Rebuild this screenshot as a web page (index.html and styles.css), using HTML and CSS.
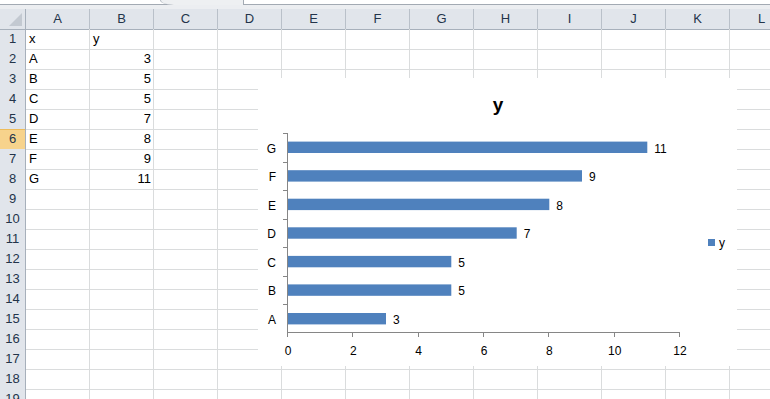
FILE: index.html
```html
<!DOCTYPE html>
<html>
<head>
  <title>Book1 - Microsoft Excel</title>
  <meta charset="utf-8">
  <link rel="stylesheet" href="styles.css">
</head>
<body>
  <div class="topbar">
    <div class="formula-bar">
      <div class="formula-grip"></div>
    </div>
  </div>

  <div class="sheet">
    <div class="row head-row">
      <div class="corner"></div>
      <div class="col-head">A</div><div class="col-head">B</div><div class="col-head">C</div><div class="col-head">D</div>
      <div class="col-head">E</div><div class="col-head">F</div><div class="col-head">G</div><div class="col-head">H</div>
      <div class="col-head">I</div><div class="col-head">J</div><div class="col-head">K</div><div class="col-head">L</div>
    </div>
    <div class="row">
      <div class="row-head">1</div><div class="cell">x</div><div class="cell">y</div>
      <div class="cell"></div><div class="cell"></div><div class="cell"></div><div class="cell"></div><div class="cell"></div><div class="cell"></div><div class="cell"></div><div class="cell"></div><div class="cell"></div><div class="cell"></div>
    </div>
    <div class="row">
      <div class="row-head">2</div><div class="cell">A</div><div class="cell num">3</div>
      <div class="cell"></div><div class="cell"></div><div class="cell"></div><div class="cell"></div><div class="cell"></div><div class="cell"></div><div class="cell"></div><div class="cell"></div><div class="cell"></div><div class="cell"></div>
    </div>
    <div class="row">
      <div class="row-head">3</div><div class="cell">B</div><div class="cell num">5</div>
      <div class="cell"></div><div class="cell"></div><div class="cell"></div><div class="cell"></div><div class="cell"></div><div class="cell"></div><div class="cell"></div><div class="cell"></div><div class="cell"></div><div class="cell"></div>
    </div>
    <div class="row">
      <div class="row-head">4</div><div class="cell">C</div><div class="cell num">5</div>
      <div class="cell"></div><div class="cell"></div><div class="cell"></div><div class="cell"></div><div class="cell"></div><div class="cell"></div><div class="cell"></div><div class="cell"></div><div class="cell"></div><div class="cell"></div>
    </div>
    <div class="row">
      <div class="row-head">5</div><div class="cell">D</div><div class="cell num">7</div>
      <div class="cell"></div><div class="cell"></div><div class="cell"></div><div class="cell"></div><div class="cell"></div><div class="cell"></div><div class="cell"></div><div class="cell"></div><div class="cell"></div><div class="cell"></div>
    </div>
    <div class="row">
      <div class="row-head selected">6</div><div class="cell">E</div><div class="cell num">8</div>
      <div class="cell"></div><div class="cell"></div><div class="cell"></div><div class="cell"></div><div class="cell"></div><div class="cell"></div><div class="cell"></div><div class="cell"></div><div class="cell"></div><div class="cell"></div>
    </div>
    <div class="row">
      <div class="row-head">7</div><div class="cell">F</div><div class="cell num">9</div>
      <div class="cell"></div><div class="cell"></div><div class="cell"></div><div class="cell"></div><div class="cell"></div><div class="cell"></div><div class="cell"></div><div class="cell"></div><div class="cell"></div><div class="cell"></div>
    </div>
    <div class="row">
      <div class="row-head">8</div><div class="cell">G</div><div class="cell num">11</div>
      <div class="cell"></div><div class="cell"></div><div class="cell"></div><div class="cell"></div><div class="cell"></div><div class="cell"></div><div class="cell"></div><div class="cell"></div><div class="cell"></div><div class="cell"></div>
    </div>
    <div class="row">
      <div class="row-head">9</div>
      <div class="cell"></div><div class="cell"></div><div class="cell"></div><div class="cell"></div><div class="cell"></div><div class="cell"></div><div class="cell"></div><div class="cell"></div><div class="cell"></div><div class="cell"></div><div class="cell"></div><div class="cell"></div>
    </div>
    <div class="row">
      <div class="row-head">10</div>
      <div class="cell"></div><div class="cell"></div><div class="cell"></div><div class="cell"></div><div class="cell"></div><div class="cell"></div><div class="cell"></div><div class="cell"></div><div class="cell"></div><div class="cell"></div><div class="cell"></div><div class="cell"></div>
    </div>
    <div class="row">
      <div class="row-head">11</div>
      <div class="cell"></div><div class="cell"></div><div class="cell"></div><div class="cell"></div><div class="cell"></div><div class="cell"></div><div class="cell"></div><div class="cell"></div><div class="cell"></div><div class="cell"></div><div class="cell"></div><div class="cell"></div>
    </div>
    <div class="row">
      <div class="row-head">12</div>
      <div class="cell"></div><div class="cell"></div><div class="cell"></div><div class="cell"></div><div class="cell"></div><div class="cell"></div><div class="cell"></div><div class="cell"></div><div class="cell"></div><div class="cell"></div><div class="cell"></div><div class="cell"></div>
    </div>
    <div class="row">
      <div class="row-head">13</div>
      <div class="cell"></div><div class="cell"></div><div class="cell"></div><div class="cell"></div><div class="cell"></div><div class="cell"></div><div class="cell"></div><div class="cell"></div><div class="cell"></div><div class="cell"></div><div class="cell"></div><div class="cell"></div>
    </div>
    <div class="row">
      <div class="row-head">14</div>
      <div class="cell"></div><div class="cell"></div><div class="cell"></div><div class="cell"></div><div class="cell"></div><div class="cell"></div><div class="cell"></div><div class="cell"></div><div class="cell"></div><div class="cell"></div><div class="cell"></div><div class="cell"></div>
    </div>
    <div class="row">
      <div class="row-head">15</div>
      <div class="cell"></div><div class="cell"></div><div class="cell"></div><div class="cell"></div><div class="cell"></div><div class="cell"></div><div class="cell"></div><div class="cell"></div><div class="cell"></div><div class="cell"></div><div class="cell"></div><div class="cell"></div>
    </div>
    <div class="row">
      <div class="row-head">16</div>
      <div class="cell"></div><div class="cell"></div><div class="cell"></div><div class="cell"></div><div class="cell"></div><div class="cell"></div><div class="cell"></div><div class="cell"></div><div class="cell"></div><div class="cell"></div><div class="cell"></div><div class="cell"></div>
    </div>
    <div class="row">
      <div class="row-head">17</div>
      <div class="cell"></div><div class="cell"></div><div class="cell"></div><div class="cell"></div><div class="cell"></div><div class="cell"></div><div class="cell"></div><div class="cell"></div><div class="cell"></div><div class="cell"></div><div class="cell"></div><div class="cell"></div>
    </div>
    <div class="row">
      <div class="row-head">18</div>
      <div class="cell"></div><div class="cell"></div><div class="cell"></div><div class="cell"></div><div class="cell"></div><div class="cell"></div><div class="cell"></div><div class="cell"></div><div class="cell"></div><div class="cell"></div><div class="cell"></div><div class="cell"></div>
    </div>
    <div class="row">
      <div class="row-head">19</div>
      <div class="cell"></div><div class="cell"></div><div class="cell"></div><div class="cell"></div><div class="cell"></div><div class="cell"></div><div class="cell"></div><div class="cell"></div><div class="cell"></div><div class="cell"></div><div class="cell"></div><div class="cell"></div>
    </div>

    <!-- embedded chart, sits over the cells -->
    <div class="chart">
      <svg width="479" height="288" viewBox="0 0 479 288">
        <g transform="translate(-258 -78)">
          <text class="chart-title" x="498" y="111">y</text>

          <g class="bars">
            <rect x="288" y="313.0" width="98" height="11.4"/>
            <rect x="288" y="284.4" width="163.3" height="11.4"/>
            <rect x="288" y="255.9" width="163.3" height="11.4"/>
            <rect x="288" y="227.3" width="228.7" height="11.4"/>
            <rect x="288" y="198.7" width="261.3" height="11.4"/>
            <rect x="288" y="170.2" width="294" height="11.4"/>
            <rect x="288" y="141.6" width="359.3" height="11.4"/>
          </g>

          <g class="axis" shape-rendering="crispEdges">
            <line x1="287.5" y1="133" x2="287.5" y2="333"/>
            <line x1="283" y1="133.5" x2="288" y2="133.5"/>
            <line x1="283" y1="162" x2="288" y2="162"/>
            <line x1="283" y1="190.5" x2="288" y2="190.5"/>
            <line x1="283" y1="219" x2="288" y2="219"/>
            <line x1="283" y1="247.5" x2="288" y2="247.5"/>
            <line x1="283" y1="276" x2="288" y2="276"/>
            <line x1="283" y1="304.5" x2="288" y2="304.5"/>
            <line x1="287" y1="332.5" x2="680" y2="332.5"/>
            <line x1="287.5" y1="332" x2="287.5" y2="337"/>
            <line x1="352.8" y1="332" x2="352.8" y2="337"/>
            <line x1="418.2" y1="332" x2="418.2" y2="337"/>
            <line x1="483.5" y1="332" x2="483.5" y2="337"/>
            <line x1="548.8" y1="332" x2="548.8" y2="337"/>
            <line x1="614.2" y1="332" x2="614.2" y2="337"/>
            <line x1="679.5" y1="332" x2="679.5" y2="337"/>
          </g>

          <g class="cat-labels">
            <text x="276" y="324">A</text>
            <text x="276" y="295.4">B</text>
            <text x="276" y="266.9">C</text>
            <text x="276" y="238.3">D</text>
            <text x="276" y="209.7">E</text>
            <text x="276" y="181.2">F</text>
            <text x="276" y="152.6">G</text>
          </g>

          <g class="val-labels">
            <text x="393" y="324">3</text>
            <text x="458.3" y="295.4">5</text>
            <text x="458.3" y="266.9">5</text>
            <text x="523.7" y="238.3">7</text>
            <text x="556.3" y="209.7">8</text>
            <text x="589" y="181.2">9</text>
            <text x="654.3" y="152.6">11</text>
          </g>

          <g class="x-labels">
            <text x="288" y="355">0</text>
            <text x="353.3" y="355">2</text>
            <text x="418.7" y="355">4</text>
            <text x="484" y="355">6</text>
            <text x="549.3" y="355">8</text>
            <text x="614.7" y="355">10</text>
            <text x="680" y="355">12</text>
          </g>

          <rect class="legend-key" x="708" y="239" width="7" height="7"/>
          <text class="legend-text" x="719" y="247">y</text>
        </g>
      </svg>
    </div>
  </div>
</body>
</html>
```

FILE: styles.css
```css
* {
  margin: 0;
  padding: 0;
  box-sizing: border-box;
}

body {
  width: 770px;
  height: 399px;
  overflow: hidden;
  background: white;
  font-family: 'Liberation Sans', Arial, sans-serif;
  font-size: 13px;
  color: #000;
}

/* strip left over from the formula bar */
.topbar {
  height: 9px;
  background: #eceef1;
}

.formula-bar {
  height: 5px;
  background: white;
  border-bottom: 1px solid #a3aab3;
  position: relative;
}

.formula-grip {
  position: absolute;
  left: 160px;
  top: 0;
  width: 84px;
  height: 5px;
  background: #eef0f2;
  border-left: 1px solid #b4bac2;
  border-right: 1px solid #a3aab3;
  border-bottom-left-radius: 14px 5px;
}

.sheet {
  position: relative;
}

.row {
  display: grid;
  grid-template-columns: 26px repeat(12, 64px);
  height: 20px;
}

.cell {
  border-right: 1px solid #dadcdd;
  border-bottom: 1px solid #dadcdd;
  padding: 0 2px 0 3px;
  line-height: 20px;
  white-space: nowrap;
  overflow: hidden;
}

.num {
  text-align: right;
}

.corner,
.col-head,
.row-head {
  background: #e1e5eb;
  color: #23344a;
  text-align: center;
  line-height: 20px;
}

.corner {
  border-right: 1px solid #a7b0bb;
  border-bottom: 1px solid #a7b0bb;
  position: relative;
}

.corner::after {
  content: "";
  position: absolute;
  right: 3px;
  bottom: 3px;
  border-left: 13px solid transparent;
  border-bottom: 13px solid #c3c9d1;
}

.col-head {
  border-right: 1px solid #b9c0c9;
  border-bottom: 1px solid #a7b0bb;
}

.row-head {
  border-right: 1px solid #a7b0bb;
  border-bottom: 1px solid #c3c9d1;
}

.row-head.selected {
  background: #f7d38c;
  border-bottom-color: #e8b047;
  box-shadow: inset 0 1px 0 #eebc5a;
}

/* chart object */
.chart {
  position: absolute;
  left: 258px;
  top: 69px;
  width: 479px;
  height: 288px;
  background: white;
}

.chart svg {
  display: block;
}

.chart text {
  font-family: 'Liberation Sans', Arial, sans-serif;
  font-size: 12px;
  fill: #000;
}

.chart .chart-title {
  font-size: 19px;
  font-weight: bold;
  text-anchor: middle;
}

.bars rect,
.legend-key {
  fill: #4f81bd;
}

.axis line {
  stroke: #868686;
  stroke-width: 1;
}

.cat-labels text {
  text-anchor: end;
}

.x-labels text {
  text-anchor: middle;
}
```
